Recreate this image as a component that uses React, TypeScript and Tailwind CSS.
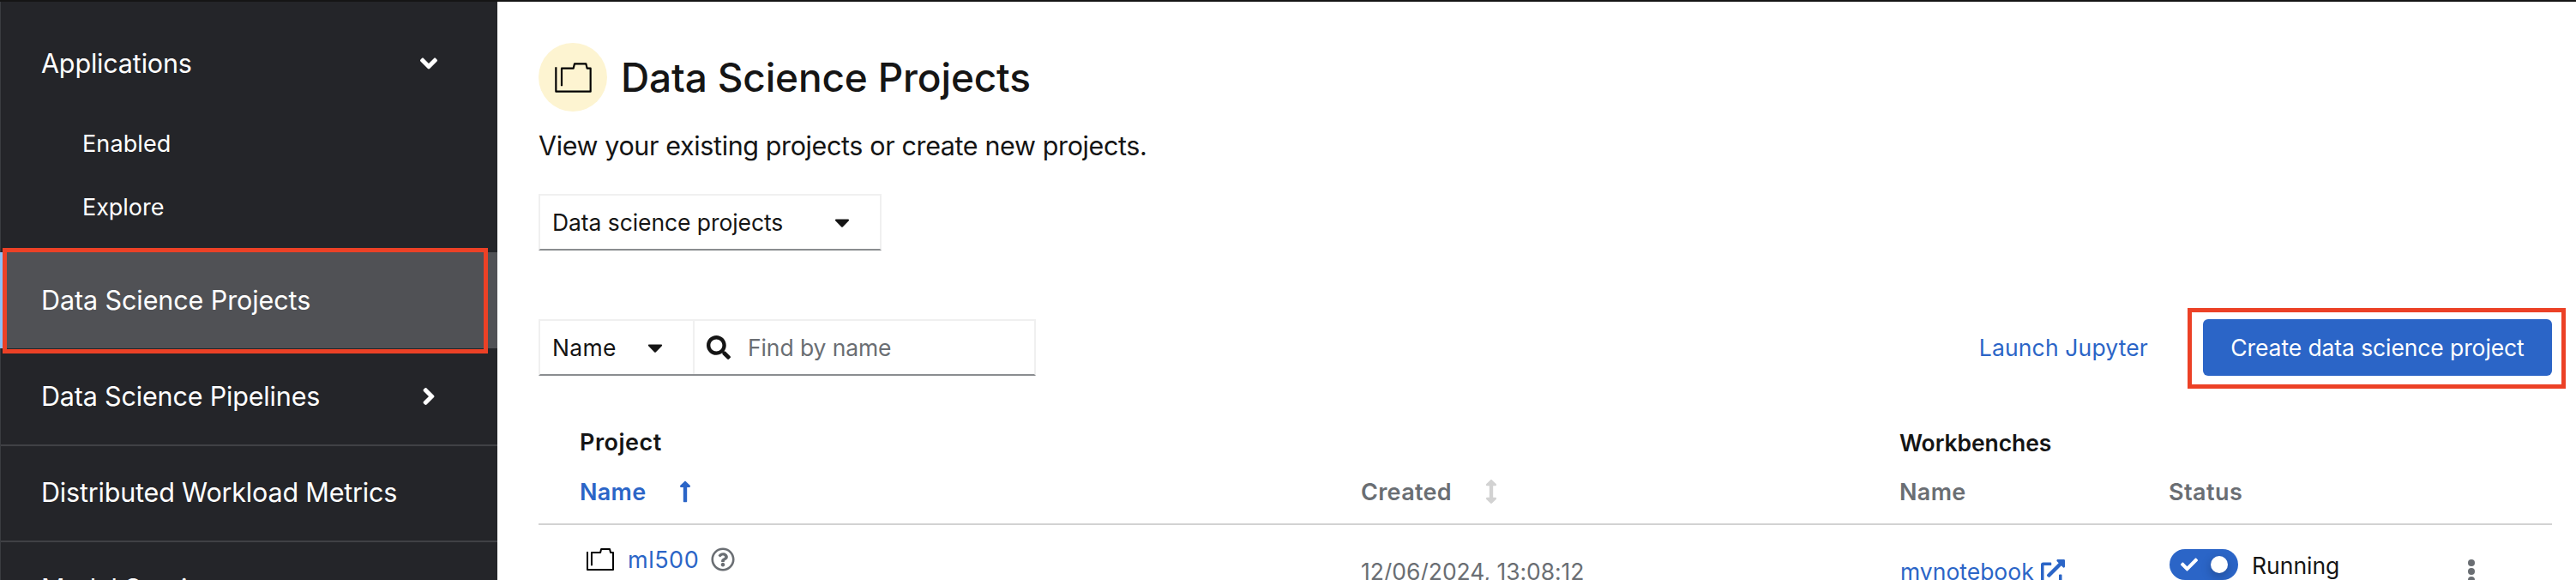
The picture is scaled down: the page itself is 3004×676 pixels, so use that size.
import {
  FaAngleDown,
  FaAngleRight,
  FaArrowsAltV,
  FaCaretDown,
  FaCheck,
  FaExternalLinkAlt,
  FaLongArrowAltUp,
  FaRegQuestionCircle,
  FaSearch,
} from "react-icons/fa";

function ProjectIcon({ className, strokeWidth }: { className: string; strokeWidth: number }) {
  return (
    <svg viewBox="0 0 129 105" preserveAspectRatio="none" className={className} fill="none" stroke="#000" strokeWidth={strokeWidth}>
      <path d="M4 16V101H125V20H113L109 4H69L65 20H24V82" strokeLinejoin="round" />
    </svg>
  );
}

function Sidebar() {
  return (
    <nav className="w-[580px] h-full shrink-0 border-l border-[#3a3c40] bg-[#242529] pt-4 text-[30.5px] leading-[40px] text-white">
      <div className="flex h-[112px] items-center justify-between pl-[47px] pr-[64px]">
        <span className="tracking-[-0.17px]">Applications</span>
        <FaAngleDown size={32} />
      </div>
      <div className="pb-4 pl-[95px] text-[27px]">
        <div className="flex h-[74px] items-center pt-0.5 tracking-[0.1px]">Enabled</div>
        <div className="flex h-[74px] items-center pt-0.5 tracking-[-0.05px]">Explore</div>
      </div>
      <div className="relative -ml-px h-[112px] border-l-8 border-[#8bc1f7] bg-[#505155]">
        <div className="flex h-full items-center pl-[40px] tracking-[-0.09px]">Data Science Projects</div>
        <div className="absolute -left-[5px] -top-[5px] h-[123px] w-[566px] border-[5px] border-[#ec4126]" />
      </div>
      <div className="flex h-[112px] items-center justify-between pl-[47px] pr-[64px]">
        <span className="tracking-[-0.17px]">Data Science Pipelines</span>
        <FaAngleRight size={32} />
      </div>
      <div className="flex h-[112px] items-center border-t-2 border-[#404145] pb-0.5 pl-[47px] tracking-[-0.18px]">
        Distributed Workload Metrics
      </div>
      <div className="flex h-[112px] items-center border-t-2 border-[#404145] pb-0.5 pl-[47px] tracking-[-0.17px]">
        Model Serving
      </div>
    </nav>
  );
}

function Toolbar() {
  return (
    <div className="mt-20 flex h-[66px] items-center justify-between">
      <div className="flex h-full w-[580px] border-2 border-[#f0f0f0] border-b-[#8a8d90]">
        <div className="flex w-[178px] items-center justify-between pl-[14px] pr-[30px]">
          <span className="tracking-[0.3px]">Name</span>
          <FaCaretDown size={28} />
        </div>
        <div className="flex flex-1 items-center border-l-2 border-[#f0f0f0] pl-[14px]">
          <FaSearch size={28} />
          <span className="ml-[20px] tracking-[-0.1px] text-[#6a6e73]">Find by name</span>
        </div>
      </div>
      <div className="flex h-full items-center">
        <span className="mr-[64px] tracking-[0.15px] text-[#2b65c7]">Launch Jupyter</span>
        <div className="relative flex h-[66px] w-[407px] items-center justify-center rounded-md bg-[#2b65c7] tracking-[-0.1px] text-white">
          Create data science project
          <div className="absolute -left-[18px] -top-[13px] h-[94px] w-[441px] border-[5px] border-[#ec4126]" />
        </div>
      </div>
    </div>
  );
}

function ProjectsTable() {
  return (
    <div className="mt-12">
      <div className="grid grid-cols-[959px_627px_315px_447px] border-b-2 border-[#d2d2d2] pb-2 text-[27px] font-semibold text-[#6a6e73]">
        <div className="flex h-[58px] items-center pl-12 pt-0.5 tracking-[0.5px] text-[#151515]">Project</div>
        <div />
        <div className="col-span-2 flex h-[58px] items-center pl-px pt-0.5 text-[26.5px] tracking-[-0.08px] text-[#151515]">
          Workbenches
        </div>
        <div className="flex h-[58px] items-center pl-12 text-[#2b65c7]">
          <span className="w-[109px] pt-0.5 tracking-[0.3px]">Name</span>
          <FaLongArrowAltUp size={28} />
        </div>
        <div className="flex h-[58px] items-center">
          <span className="w-[138px] pt-0.5 tracking-[0.3px]">Created</span>
          <FaArrowsAltV size={28} className="text-[#d2d2d2]" />
        </div>
        <div className="flex h-[58px] items-center pl-px pt-0.5 tracking-[0.35px]">Name</div>
        <div className="flex h-[58px] items-center pt-0.5 tracking-[0.45px]">Status</div>
      </div>
      <div className="grid grid-cols-[959px_628px_314px_447px] items-start">
        <div className="flex h-20 items-center pl-14">
          <ProjectIcon className="h-[26px] w-[32px]" strokeWidth={8} />
          <span className="ml-4 w-[97px] pt-0.5 text-[27px] tracking-[0.5px] text-[#2b65c7]">ml500</span>
          <FaRegQuestionCircle size={28} className="text-[#6a6e73]" />
        </div>
        <div className="flex h-[108px] items-center tracking-[-0.06px] text-[#6a6e73]">12/06/2024, 13:08:12</div>
        <div className="flex h-[108px] items-center text-[#2b65c7]">
          <span className="w-[165px] pl-px">mynotebook</span>
          <FaExternalLinkAlt size={28} />
        </div>
        <div className="flex items-start pl-px">
          <div className="mt-7 flex h-9 w-20 items-center justify-between rounded-full bg-[#2b65c7] pl-[13px] pr-3 text-white">
            <FaCheck size={20} />
            <div className="size-5 rounded-full bg-white shadow-[0_4px_12px_rgba(0,0,0,0.25)]" />
          </div>
          <div className="ml-4 mt-[27px] w-[252px] leading-[40px]">Running</div>
          <svg viewBox="0 0 8 30" className="mt-[39px] h-[30px] w-2" fill="#6a6e73">
            <circle cx="4" cy="5" r="4" />
            <circle cx="4" cy="15" r="4" />
            <circle cx="4" cy="25" r="4" />
          </svg>
        </div>
      </div>
    </div>
  );
}

export default function App() {
  return (
    <div className="flex h-[676px] w-[3004px] flex-col overflow-hidden bg-white font-['Inter',sans-serif] text-[#151515]">
      <div className="h-0.5 shrink-0 bg-[#151515]" />
      <div className="flex h-[674px] overflow-hidden">
        <Sidebar />
        <main className="flex-1 pl-12 pr-7 pt-12 text-[26.5px] leading-[40px]">
          <div className="flex h-20 items-center gap-4">
            <div className="flex size-20 items-center justify-center rounded-full bg-[#fdf4d1]">
              <ProjectIcon className="h-[35px] w-[43px]" strokeWidth={6.5} />
            </div>
            <h1 className="text-[46px] font-medium leading-[60px] tracking-[-0.17px]">Data Science Projects</h1>
          </div>
          <p className="mt-5 text-[30.5px] leading-[40px] tracking-[-0.38px]">
            View your existing projects or create new projects.
          </p>
          <div className="mt-9 flex h-[66px] w-[400px] items-center justify-between border-2 border-[#f0f0f0] border-b-[#8a8d90] pl-[14px] pr-[30px]">
            <span className="tracking-[-0.08px]">Data science projects</span>
            <FaCaretDown size={28} />
          </div>
          <Toolbar />
          <ProjectsTable />
        </main>
      </div>
    </div>
  );
}
